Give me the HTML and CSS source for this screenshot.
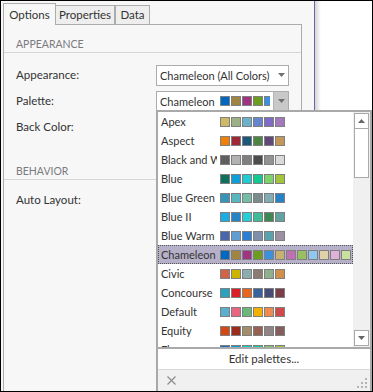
FILE: index.html
```html
<!DOCTYPE html>
<html>
<head>
<meta charset="utf-8">
<link rel="stylesheet" href="styles.css">
</head>
<body>
<div class="frame">
  <div class="panel">
    <div class="tabs">
      <div class="tab active">Options</div>
      <div class="tab props">Properties</div>
      <div class="tab data">Data</div>
    </div>
    <div class="box">
      <div class="section-head first">APPEARANCE</div>
      <div class="rows first-rows">
        <div class="row">
          <span class="label">Appearance:</span>
          <div class="combo">
            <span class="combo-text">Chameleon (All Colors)</span>
            <span class="combo-btn"><svg width="7" height="4" viewBox="0 0 7 4"><path d="M0 0H7L3.5 4Z" fill="#707070"/></svg></span>
          </div>
        </div>
        <div class="row">
          <span class="label">Palette:</span>
          <div class="combo">
            <span class="combo-text short">Chameleon</span>
            <span class="combo-swatches">
              <i class="sw" style="background:#0068c0"></i><i class="sw" style="background:#a08444"></i><i class="sw" style="background:#a03480"></i><i class="sw" style="background:#6c9c20"></i><i class="sw" style="background:#3c90e0"></i>
            </span>
            <span class="combo-btn pressed"><svg width="7" height="4" viewBox="0 0 7 4"><path d="M0 0H7L3.5 4Z" fill="#707070"/></svg></span>
          </div>
        </div>
        <div class="row">
          <span class="label">Back Color:</span>
        </div>
      </div>
      <div class="section-head second">BEHAVIOR</div>
      <div class="rows second-rows">
        <div class="row">
          <span class="label">Auto Layout:</span>
        </div>
      </div>
    </div>
  </div>
  <div class="edge"></div>
  <div class="blank"></div>

  <div class="popup">
    <div class="list-area">
      <div class="list">
        <div class="item"><span class="name">Apex</span><span class="sws"><i class="sw" style="background:#ceb966"></i><i class="sw" style="background:#9cb084"></i><i class="sw" style="background:#6bb1c9"></i><i class="sw" style="background:#6585cf"></i><i class="sw" style="background:#7e6bc9"></i><i class="sw" style="background:#a379bb"></i></span></div>
        <div class="item"><span class="name">Aspect</span><span class="sws"><i class="sw" style="background:#f07f09"></i><i class="sw" style="background:#9f2936"></i><i class="sw" style="background:#1b587c"></i><i class="sw" style="background:#4e8542"></i><i class="sw" style="background:#604878"></i><i class="sw" style="background:#c19859"></i></span></div>
        <div class="item"><span class="name">Black and White</span><span class="sws"><i class="sw" style="background:#5f5f5f"></i><i class="sw" style="background:#b2b2b2"></i><i class="sw" style="background:#808080"></i><i class="sw" style="background:#4c4c4c"></i><i class="sw" style="background:#939393"></i><i class="sw" style="background:#dadada"></i></span></div>
        <div class="item"><span class="name">Blue</span><span class="sws"><i class="sw" style="background:#10705e"></i><i class="sw" style="background:#0f9ed5"></i><i class="sw" style="background:#20cbd6"></i><i class="sw" style="background:#13c891"></i><i class="sw" style="background:#7bd466"></i><i class="sw" style="background:#a2c53c"></i></span></div>
        <div class="item"><span class="name">Blue Green</span><span class="sws"><i class="sw" style="background:#3494ba"></i><i class="sw" style="background:#58b6c0"></i><i class="sw" style="background:#75bda7"></i><i class="sw" style="background:#7a8c8e"></i><i class="sw" style="background:#84acb6"></i><i class="sw" style="background:#2683c6"></i></span></div>
        <div class="item"><span class="name">Blue II</span><span class="sws"><i class="sw" style="background:#1cade4"></i><i class="sw" style="background:#2683c6"></i><i class="sw" style="background:#27ced7"></i><i class="sw" style="background:#42ba97"></i><i class="sw" style="background:#3e8853"></i><i class="sw" style="background:#62a39f"></i></span></div>
        <div class="item"><span class="name">Blue Warm</span><span class="sws"><i class="sw" style="background:#4a66ac"></i><i class="sw" style="background:#629dd1"></i><i class="sw" style="background:#297fd5"></i><i class="sw" style="background:#7f8fa9"></i><i class="sw" style="background:#5aa2ae"></i><i class="sw" style="background:#9d90a0"></i></span></div>
        <div class="item selected"><span class="name">Chameleon</span><span class="sws"><i class="sw" style="background:#0068c0"></i><i class="sw" style="background:#a08444"></i><i class="sw" style="background:#a03480"></i><i class="sw" style="background:#6c9c20"></i><i class="sw" style="background:#3c90e0"></i><i class="sw" style="background:#c8b070"></i><i class="sw" style="background:#c070b0"></i><i class="sw" style="background:#98c060"></i><i class="sw" style="background:#90c8f0"></i><i class="sw" style="background:#e0d2a8"></i><i class="sw" style="background:#e0b0d8"></i><i class="sw" style="background:#c8e0a0"></i></span></div>
        <div class="item"><span class="name">Civic</span><span class="sws"><i class="sw" style="background:#d16349"></i><i class="sw" style="background:#ccb400"></i><i class="sw" style="background:#8cadae"></i><i class="sw" style="background:#8c7b70"></i><i class="sw" style="background:#8fb08c"></i><i class="sw" style="background:#d19049"></i></span></div>
        <div class="item"><span class="name">Concourse</span><span class="sws"><i class="sw" style="background:#2da2bf"></i><i class="sw" style="background:#da1f28"></i><i class="sw" style="background:#eb641b"></i><i class="sw" style="background:#39639d"></i><i class="sw" style="background:#474b78"></i><i class="sw" style="background:#7d3c4a"></i></span></div>
        <div class="item"><span class="name">Default</span><span class="sws"><i class="sw" style="background:#5aafcf"></i><i class="sw" style="background:#e8667f"></i><i class="sw" style="background:#6ab878"></i><i class="sw" style="background:#f2b000"></i><i class="sw" style="background:#f08a50"></i><i class="sw" style="background:#d14a4a"></i></span></div>
        <div class="item"><span class="name">Equity</span><span class="sws"><i class="sw" style="background:#d34817"></i><i class="sw" style="background:#9b2d1f"></i><i class="sw" style="background:#a28e6a"></i><i class="sw" style="background:#956251"></i><i class="sw" style="background:#918485"></i><i class="sw" style="background:#855d5d"></i></span></div>
        <div class="item"><span class="name">Flow</span><span class="sws"><i class="sw" style="background:#0f6fc6"></i><i class="sw" style="background:#009dd9"></i><i class="sw" style="background:#0bd0d9"></i><i class="sw" style="background:#10cf9b"></i><i class="sw" style="background:#7cca62"></i><i class="sw" style="background:#a5c249"></i></span></div>
      </div>
      <div class="scrollbar">
        <div class="sb-btn"><svg width="7" height="4" viewBox="0 0 7 4"><path d="M0 4H7L3.5 0Z" fill="#666"/></svg></div>
        <div class="sb-thumb"></div>
        <div class="sb-track"></div>
        <div class="sb-btn"><svg width="7" height="4" viewBox="0 0 7 4"><path d="M0 0H7L3.5 4Z" fill="#666"/></svg></div>
      </div>
    </div>
    <div class="edit-row">Edit palettes...</div>
    <div class="footer">
      <svg class="close" width="9" height="9" viewBox="0 0 9 9"><path d="M0.5 0.5L8.5 8.5M8.5 0.5L0.5 8.5" stroke="#8c8c8c" stroke-width="1.2"/></svg>
      <svg class="grip" width="10" height="10" viewBox="0 0 10 10" fill="#b4b4b4">
        <rect x="8" y="0" width="2" height="2"/>
        <rect x="4" y="4" width="2" height="2"/><rect x="8" y="4" width="2" height="2"/>
        <rect x="0" y="8" width="2" height="2"/><rect x="4" y="8" width="2" height="2"/><rect x="8" y="8" width="2" height="2"/>
      </svg>
    </div>
  </div>
</div>
</body>
</html>
```

FILE: styles.css
```css
html, body {
  margin: 0;
  padding: 0;
  background: #fff;
}
body {
  font-family: Lato, "Liberation Sans", sans-serif;
  font-size: 11px;
  color: #333;
}
.frame {
  position: relative;
  width: 373px;
  height: 392px;
  border: 1px solid #000;
  box-sizing: border-box;
  display: flex;
  overflow: hidden;
}
.panel {
  width: 313px;
  background: #f7f7f7;
  padding: 2px 0 0 2px;
  box-sizing: border-box;
  display: flex;
  flex-direction: column;
}
.edge {
  width: 1px;
  background: #6f63a6;
}
.blank {
  flex: 1;
  background: linear-gradient(to right, #d4d4d4, #fff 6px);
}
.tabs {
  display: flex;
  align-items: flex-start;
  height: 22px;
  position: relative;
  z-index: 1;
}
.tab {
  box-sizing: border-box;
  border: 1px solid #acacac;
  background: #eeeeee;
  margin-top: 2px;
  height: 20px;
  line-height: 18px;
  text-align: center;
  color: #333;
  font-size: 11.5px;
}
.tab.active {
  margin-top: 0;
  height: 22px;
  border-bottom: none;
  background: #f7f7f7;
  width: 53px;
  line-height: 22px;
  position: relative;
  z-index: 2;
}
.tab.props {
  width: 60px;
  margin-left: -1px;
}
.tab.data {
  width: 35px;
}
.box {
  width: 299px;
  flex: 1;
  margin-top: -1px;
  border: 1px solid #acacac;
  border-bottom: none;
  box-sizing: border-box;
}
.section-head {
  padding-left: 12px;
  color: #7a7a80;
  font-size: 10.5px;
  line-height: 14px;
  border-bottom: 1px solid #d6d6d6;
}
.section-head.first {
  padding-top: 12px;
  padding-bottom: 1px;
}
.section-head.second {
  padding-top: 24px;
  padding-bottom: 1px;
}
.first-rows {
  padding-top: 9px;
}
.second-rows {
  padding-top: 7px;
}
.row {
  display: flex;
  align-items: center;
  height: 26px;
  padding-left: 12px;
}
.label {
  width: 140px;
  font-size: 11.5px;
  line-height: 26px;
  color: #333;
}
.combo {
  width: 133px;
  height: 21px;
  box-sizing: border-box;
  border: 1px solid #acacac;
  background: #fff;
  display: flex;
  align-items: center;
  font-size: 11px;
  color: #333;
}
.combo-text {
  flex: 1;
  padding-left: 3px;
  white-space: nowrap;
  overflow: hidden;
}
.combo-text.short {
  flex: none;
  width: 60px;
}
.combo-swatches {
  flex: 1;
  display: flex;
  gap: 1px;
  overflow: hidden;
  height: 10px;
  margin-right: 3px;
}
.combo-btn {
  width: 14px;
  height: 100%;
  display: flex;
  align-items: center;
  justify-content: center;
}
.combo-btn.pressed {
  background: #c8c8c8;
  border-left: 1px solid #b4b4b4;
}
.sw {
  display: block;
  flex: none;
  width: 10px;
  height: 10px;
  box-sizing: border-box;
  border: 1px solid #7f7f7f;
}

/* popup */
.popup {
  position: absolute;
  left: 155px;
  top: 109px;
  width: 216px;
  bottom: 0;
  box-sizing: border-box;
  border: 2px solid #a9a9a9;
  border-bottom: none;
  background: #fff;
  display: flex;
  flex-direction: column;
  z-index: 5;
}
.list-area {
  height: 235px;
  display: flex;
  border-bottom: 2px solid #a9a9a9;
}
.list {
  width: 195px;
  overflow: hidden;
}
.item {
  height: 19px;
  display: flex;
  align-items: center;
  padding-left: 3px;
  font-size: 11px;
  color: #333;
  box-sizing: border-box;
}
.item.selected {
  background: #b6b0c9;
  border: 1px dotted #555;
  padding-left: 2px;
}
.name {
  width: 56px;
  flex: none;
  white-space: nowrap;
  overflow: hidden;
}
.sws {
  display: flex;
  gap: 1px;
  margin-left: 3px;
}
.scrollbar {
  flex: 1;
  background: #f0f0f0;
  display: flex;
  flex-direction: column;
  padding: 1px;
  box-sizing: border-box;
}
.sb-btn {
  height: 16px;
  box-sizing: border-box;
  border: 1px solid #a9a9a9;
  background: #fff;
  display: flex;
  align-items: center;
  justify-content: center;
}
.sb-thumb {
  height: 49px;
  box-sizing: border-box;
  border: 1px solid #a9a9a9;
  border-top: none;
  background: #fff;
}
.sb-track {
  flex: 1;
}
.edit-row {
  height: 20px;
  line-height: 20px;
  text-align: center;
  font-size: 11.5px;
  color: #333;
  border-bottom: 1px solid #d8d8d8;
}
.footer {
  flex: 1;
  background: #f0f0f0;
  display: flex;
  align-items: center;
  justify-content: space-between;
  padding: 0 3px 0 9px;
}
.close {
  display: block;
}
.grip {
  display: block;
  align-self: flex-end;
  margin-bottom: 3px;
}
```
